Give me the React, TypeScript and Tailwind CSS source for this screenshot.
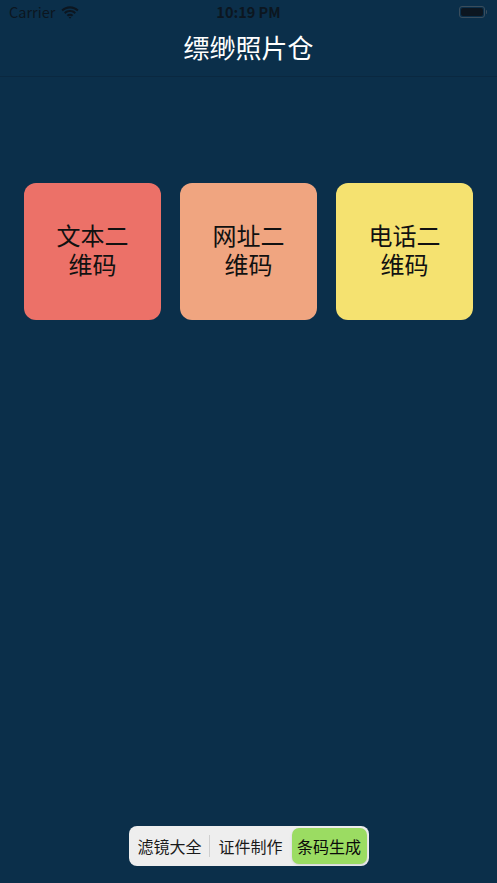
import React from 'react';

const cards = [
  { label: ['文本二', '维码'], color: 'bg-[#ec7168]' },
  { label: ['网址二', '维码'], color: 'bg-[#f0a580]' },
  { label: ['电话二', '维码'], color: 'bg-[#f5e270]' },
];

function StatusBar() {
  return (
    <div className="relative flex h-[24px] items-center px-[9px] text-[#0c1620]">
      <div className="flex items-center gap-[6px] text-[14.5px]">
        <span>Carrier</span>
        <svg width="18" height="13" viewBox="0 0 17 12" fill="currentColor">
          <path d="M8.5 2.2c2.6 0 5 1 6.8 2.7l1.3-1.4C14.4 1.4 11.6.2 8.5.2S2.6 1.4.4 3.5l1.3 1.4C3.5 3.2 5.9 2.2 8.5 2.2z" />
          <path d="M8.5 5.6c1.6 0 3.1.6 4.3 1.7l1.3-1.4C12.6 4.5 10.6 3.7 8.5 3.7S4.4 4.5 2.9 5.9l1.3 1.4c1.2-1.1 2.7-1.7 4.3-1.7z" />
          <path d="M8.5 9.1c.7 0 1.3.2 1.8.7l1.3-1.4c-.8-.8-1.9-1.2-3.1-1.2s-2.3.4-3.1 1.2l1.3 1.4c.5-.4 1.1-.7 1.8-.7zM8.5 11.8l1.2-1.3c-.3-.3-.7-.5-1.2-.5s-.9.2-1.2.5z" />
        </svg>
      </div>
      <div className="absolute left-1/2 top-0 flex h-[24px] -translate-x-1/2 items-center text-[14.5px] font-semibold">
        10:19 PM
      </div>
      <div className="ml-auto flex items-center gap-[1px] pr-[1px]">
        <div className="flex h-[12px] w-[26px] items-center rounded-[3px] border border-[#3a4d5c] p-[1px]">
          <div className="h-full w-full rounded-[2px] bg-[#0c1620]" />
        </div>
        <div className="h-[4px] w-[1.5px] rounded-r-sm bg-[#3a4d5c]" />
      </div>
    </div>
  );
}

export default function App() {
  return (
    <div
      className="flex h-[883px] w-[497px] flex-col bg-[#0b2f4a]"
      style={{ fontFamily: '"Noto Sans CJK SC", "Noto Sans", sans-serif' }}
    >
      <StatusBar />
      <div className="flex h-[53px] items-center justify-center border-b border-[#0a2840] pb-[6px] text-[26px] leading-none text-white">
        缥缈照片仓
      </div>

      <div className="mt-[106px] flex gap-[19px] px-[24px]">
        {cards.map(card => (
          <div
            key={card.label[0]}
            className={`${card.color} flex h-[137px] w-[137px] flex-col items-center justify-center rounded-[12px] text-[24px] leading-none text-[#111]`}
          >
            <span className="h-[29px]">{card.label[0]}</span>
            <span className="h-[29px]">{card.label[1]}</span>
          </div>
        ))}
      </div>

      <div className="mt-auto mb-[17px] flex justify-center">
        <div className="flex h-[40px] w-[240px] items-center rounded-[8px] bg-[#eeeeee] p-[2px] text-[16px] text-[#1a1a1a]">
          <div className="flex h-full w-[78px] items-center justify-center">滤镜大全</div>
          <div className="h-[22px] w-px bg-[#cfcfcf]" />
          <div className="flex h-full flex-1 items-center justify-center">证件制作</div>
          <div className="flex h-full w-[75px] items-center justify-center rounded-[7px] bg-[#9bdc62] text-[#0a0a0a] shadow-sm">
            条码生成
          </div>
        </div>
      </div>
    </div>
  );
}
